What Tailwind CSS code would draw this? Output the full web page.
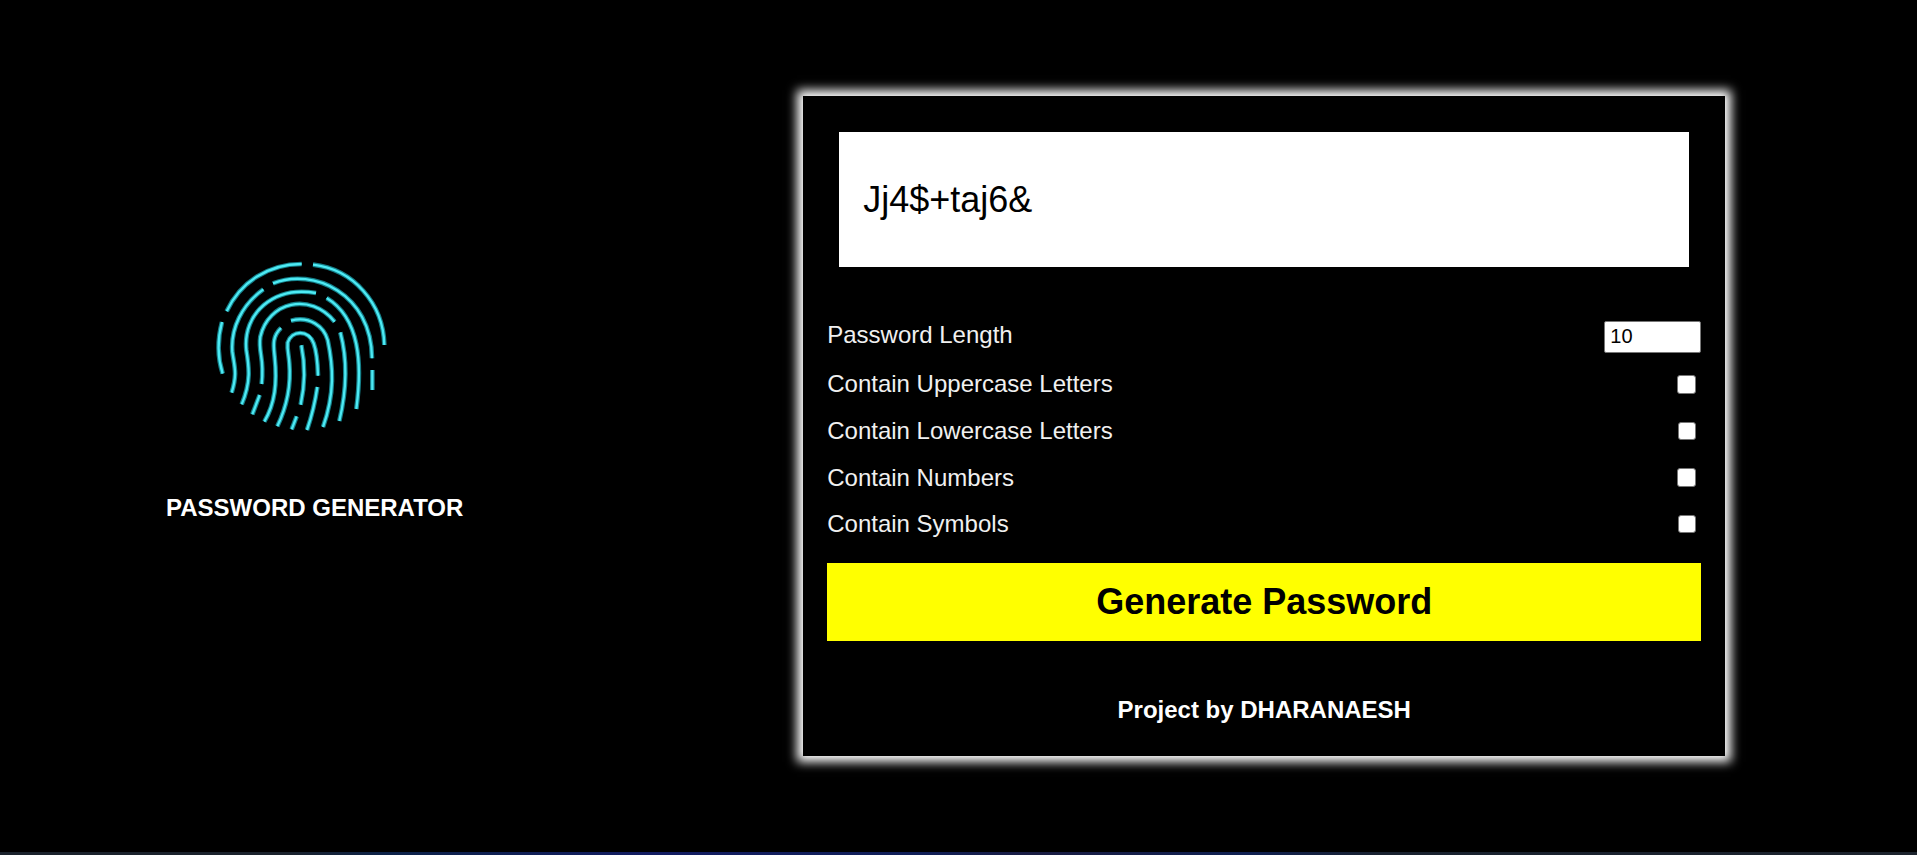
<!DOCTYPE html>
<html lang="en">
<head>
<meta charset="utf-8">
<meta name="viewport" content="width=device-width, initial-scale=1">
<title>Password Generator</title>
<script src="https://cdn.jsdelivr.net/npm/@tailwindcss/browser@4"></script>
</head>
<body class="flex min-h-screen flex-col bg-black font-['Liberation_Sans',Arial,sans-serif] text-2xl leading-6 text-white">
<main class="flex grow items-center">
  <section class="flex w-[41.9%] shrink-0 flex-col items-start gap-14 pb-[82px] pl-[166px]">
    <svg class="ml-[34px] h-[190px] w-[200px]" viewBox="0 0 600 570" fill="none" role="img" aria-label="Fingerprint">
      <defs>
        <g id="ridges">
          <path d="M80 184C121 97 204 42 305 42"/>
          <path d="M339 44C460 58 550 160 553 285"/>
          <path d="M66 216C52 268 52 320 68 371"/>
          <path d="M219 100C340 52 515 130 516 325"/>
          <path d="M190 118C125 165 92 235 97 305C103 350 113 370 95 428"/>
          <path d="M348 129C220 107 128 190 139 300C147 350 154 395 125 463"/>
          <path d="M380 144C480 205 487 340 469 477"/>
          <path d="M404 215C330 125 205 155 181 260C174 310 194 320 185 402"/>
          <path d="M273 212C330 197 372 230 383 270C400 350 405 430 369 531"/>
          <path d="M243 234C215 260 221 290 224 320C232 400 225 460 193 515"/>
          <path d="M354 377C353 340 352 310 341 280C325 238 275 240 263 278C261 300 266 310 268 340C274 410 260 470 232 529"/>
          <path d="M304 286C316 345 316 400 302 464"/>
          <path d="M421 247C443 330 440 420 418 513"/>
          <path d="M352 411C345 460 338 490 321 540"/>
          <path d="M290 499L275 538"/>
          <path d="M179 435L157 493"/>
          <path d="M517 360V420"/>
        </g>
      </defs>
      <use href="#ridges" stroke="#157f89" stroke-width="14"/>
      <use href="#ridges" stroke="#4deaf4" stroke-width="7"/>
    </svg>
    <h1 class="font-bold">PASSWORD GENERATOR</h1>
  </section>

  <form class="flex w-[48.1%] flex-col bg-black px-6 pt-9 pb-[34px] shadow-[0_0_10px_6px_#ffffff]">
    <input type="text" readonly value="Jj4$+taj6&amp;" aria-label="Generated password" class="mx-3 mb-[46px] h-[135px] bg-white px-6 text-4xl text-black outline-none">
    <div class="flex h-12 items-center justify-between">
      <label for="length" class="pb-1 text-[#f0f0f0]">Password Length</label>
      <input id="length" type="number" value="10" class="h-8 w-[97px] rounded-xs border border-[#767676] bg-white px-[5px] pb-0.5 text-xl text-black outline-none">
    </div>
    <div class="flex h-[46px] items-center justify-between pr-[5px]">
      <label for="upper" class="text-[#f0f0f0]">Contain Uppercase Letters</label>
      <input id="upper" type="checkbox" class="size-[19px] appearance-none rounded-[3px] border border-[#767676] bg-white checked:bg-blue-600">
    </div>
    <div class="flex h-[47px] items-center justify-between pr-[5px]">
      <label for="lower" class="text-[#f0f0f0]">Contain Lowercase Letters</label>
      <input id="lower" type="checkbox" class="size-[18px] appearance-none rounded-[3px] border border-[#767676] bg-white checked:bg-blue-600">
    </div>
    <div class="flex h-[47px] items-center justify-between pr-[5px]">
      <label for="numbers" class="text-[#f0f0f0]">Contain Numbers</label>
      <input id="numbers" type="checkbox" class="size-[19px] appearance-none rounded-[3px] border border-[#767676] bg-white checked:bg-blue-600">
    </div>
    <div class="flex h-[46px] items-center justify-between pr-[5px]">
      <label for="symbols" class="text-[#f0f0f0]">Contain Symbols</label>
      <input id="symbols" type="checkbox" class="size-[18px] appearance-none rounded-[3px] border border-[#767676] bg-white checked:bg-blue-600">
    </div>
    <button type="button" class="mt-4 h-[78px] bg-[#ffff00] text-4xl font-bold text-black">Generate Password</button>
    <p class="mt-[57px] text-center font-bold">Project by DHARANAESH</p>
  </form>
</main>
<div class="h-[3px] bg-[linear-gradient(90deg,#1a222c_0%,#1a222c_15%,#0c2248_20%,#121c62_34%,#101f58_48%,#191c42_54%,#0f2052_65%,#18212f_72%,#1c232d_100%)]"></div>
</body>
</html>
